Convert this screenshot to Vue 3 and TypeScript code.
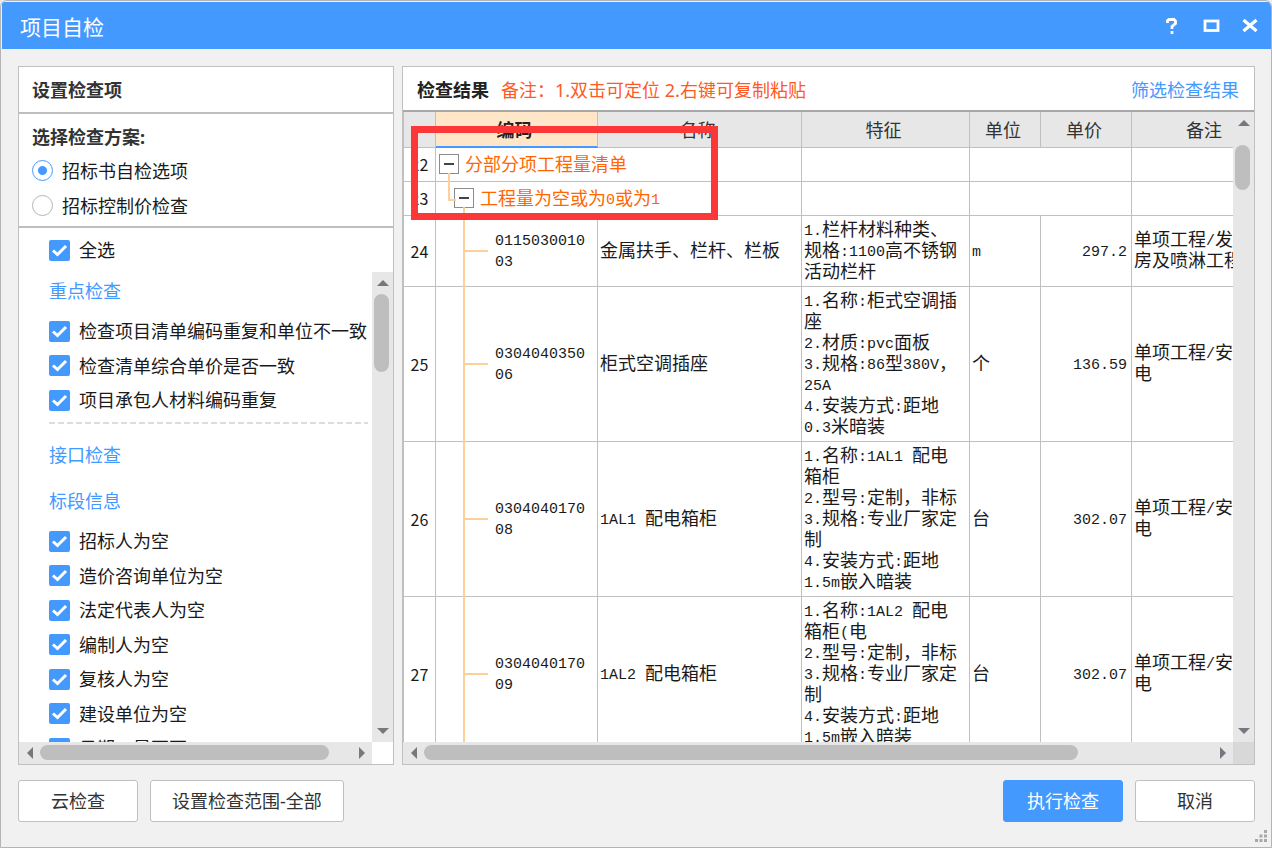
<script setup lang="ts">
import { ref } from 'vue'

interface ResultRow {
  no: number
  code: string
  name: string
  feature: string
  unit: string
  price: string
  remark: string
}

interface Run {
  text: string
  half: boolean
}

const plan = ref('bid')
const allChecked = ref(true)

const keyChecks = ref([
  { label: '检查项目清单编码重复和单位不一致', on: true },
  { label: '检查清单综合单价是否一致', on: true },
  { label: '项目承包人材料编码重复', on: true },
])

const sectionChecks = ref([
  { label: '招标人为空', on: true },
  { label: '造价咨询单位为空', on: true },
  { label: '法定代表人为空', on: true },
  { label: '编制人为空', on: true },
  { label: '复核人为空', on: true },
  { label: '建设单位为空', on: true },
  { label: '日期一是否否', on: true },
])

const rows: ResultRow[] = [
  {
    no: 24,
    code: '0115030010\n03',
    name: '金属扶手、栏杆、栏板',
    feature: '1.栏杆材料种类、\n规格:1100高不锈钢\n活动栏杆',
    unit: 'm',
    price: '297.2',
    remark: '单项工程/发\n房及喷淋工程',
  },
  {
    no: 25,
    code: '0304040350\n06',
    name: '柜式空调插座',
    feature: '1.名称:柜式空调插\n座\n2.材质:pvc面板\n3.规格:86型380V，\n25A\n4.安装方式:距地\n0.3米暗装',
    unit: '个',
    price: '136.59',
    remark: '单项工程/安\n电',
  },
  {
    no: 26,
    code: '0304040170\n08',
    name: '1AL1 配电箱柜',
    feature: '1.名称:1AL1 配电\n箱柜\n2.型号:定制，非标\n3.规格:专业厂家定\n制\n4.安装方式:距地\n1.5m嵌入暗装',
    unit: '台',
    price: '302.07',
    remark: '单项工程/安\n电',
  },
  {
    no: 27,
    code: '0304040170\n09',
    name: '1AL2 配电箱柜',
    feature: '1.名称:1AL2 配电\n箱柜(电\n2.型号:定制，非标\n3.规格:专业厂家定\n制\n4.安装方式:距地\n1.5m嵌入暗装',
    unit: '台',
    price: '302.07',
    remark: '单项工程/安\n电',
  },
]

// Splits text into half-width and full-width runs, so each gets its own font.
function runs(text: string): Run[] {
  return (text.match(/[\x20-\x7e]+|[^\x20-\x7e]+/g) ?? []).map((t) => ({
    text: t,
    half: /^[\x20-\x7e]/.test(t),
  }))
}
</script>

<template>
  <div class="window">
    <header class="titlebar">
      <h1>项目自检</h1>
      <div class="window-buttons">
        <button type="button" aria-label="帮助">
          <svg width="18" height="18" viewBox="0 0 18 18"><path d="M4.5 6V3.500L6 2.500h5L12.500 4v2.500L9 9.500V12M9 14v3" fill="none" stroke="#fff" stroke-width="2.800" /></svg>
        </button>
        <button type="button" aria-label="最大化">
          <svg width="18" height="18" viewBox="0 0 18 18"><rect x="3" y="4" width="13" height="9.500" fill="none" stroke="#fff" stroke-width="2.800" /></svg>
        </button>
        <button type="button" aria-label="关闭">
          <svg width="18" height="18" viewBox="0 0 18 18"><path d="M2.500 3L15.500 14M15.500 3L2.500 14" fill="none" stroke="#fff" stroke-width="3.200" /></svg>
        </button>
      </div>
    </header>

    <main class="content">
      <section class="panel options">
        <h2 class="panel-title">设置检查项</h2>
        <fieldset class="plans">
          <legend>选择检查方案:</legend>
          <label><input v-model="plan" type="radio" name="plan" value="bid" />招标书自检选项</label>
          <label><input v-model="plan" type="radio" name="plan" value="limit" />招标控制价检查</label>
        </fieldset>
        <label class="check select-all"><input v-model="allChecked" type="checkbox" />全选</label>
        <div class="scroll-row">
          <div class="check-list">
            <a class="group key" href="#key">重点检查</a>
            <div class="checks">
              <label v-for="c in keyChecks" :key="c.label" class="check"><input v-model="c.on" type="checkbox" />{{ c.label }}</label>
            </div>
            <svg class="divider" width="100%" height="2"><line x1="0" y1="1" x2="100%" y2="1" stroke="#dcdcdc" stroke-width="2" stroke-dasharray="6 3" /></svg>
            <a class="group api" href="#api">接口检查</a>
            <a class="group info" href="#info">标段信息</a>
            <div class="checks">
              <label v-for="c in sectionChecks" :key="c.label" class="check"><input v-model="c.on" type="checkbox" />{{ c.label }}</label>
            </div>
          </div>
          <div class="vbar">
            <button type="button" aria-label="向上滚动"><i class="arrow up"></i></button>
            <div class="track"><div class="thumb"></div></div>
            <button type="button" aria-label="向下滚动"><i class="arrow down"></i></button>
          </div>
        </div>
        <div class="bottom-row">
          <div class="hbar">
            <button type="button" aria-label="向左滚动"><i class="arrow left"></i></button>
            <div class="track"><div class="thumb"></div></div>
            <button type="button" aria-label="向右滚动"><i class="arrow right"></i></button>
          </div>
          <div class="corner"></div>
        </div>
      </section>

      <section class="panel results">
        <div class="result-title">
          <h2>检查结果</h2>
          <p>备注：1.双击可定位 2.右键可复制粘贴</p>
          <a href="#filter">筛选检查结果</a>
        </div>
        <div class="scroll-row">
          <div class="table-view">
            <table>
              <colgroup>
                <col class="c-no" /><col class="c-code" /><col class="c-name" /><col class="c-feature" />
                <col class="c-unit" /><col class="c-price" /><col class="c-remark" />
              </colgroup>
              <thead>
                <tr>
                  <th></th><th class="sorted">编码</th><th>名称</th><th>特征</th><th>单位</th><th>单价</th><th>备注</th>
                </tr>
              </thead>
              <tbody>
                <tr class="branch">
                  <td class="no">22</td>
                  <td colspan="2">
                    <div class="node level1"><button type="button" class="toggle" aria-label="折叠"></button>分部分项工程量清单</div>
                  </td>
                  <td></td><td colspan="2"></td><td></td>
                </tr>
                <tr class="branch">
                  <td class="no">23</td>
                  <td colspan="2">
                    <div class="node level2"><button type="button" class="toggle" aria-label="折叠"></button><span><span v-for="(r, i) in runs('工程量为空或为0或为1')" :key="i" :class="{ half: r.half }">{{ r.text }}</span></span></div>
                  </td>
                  <td></td><td colspan="2"></td><td></td>
                </tr>
                <tr v-for="row in rows" :key="row.no" class="item">
                  <td class="no">{{ row.no }}</td>
                  <td class="code"><span class="half">{{ row.code }}</span></td>
                  <td><span v-for="(r, i) in runs(row.name)" :key="i" :class="{ half: r.half }">{{ r.text }}</span></td>
                  <td><span v-for="(r, i) in runs(row.feature)" :key="i" :class="{ half: r.half }">{{ r.text }}</span></td>
                  <td><span v-for="(r, i) in runs(row.unit)" :key="i" :class="{ half: r.half }">{{ r.text }}</span></td>
                  <td class="price"><span class="half">{{ row.price }}</span></td>
                  <td><span v-for="(r, i) in runs(row.remark)" :key="i" :class="{ half: r.half }">{{ r.text }}</span></td>
                </tr>
              </tbody>
            </table>
          </div>
          <div class="vbar">
            <button type="button" aria-label="向上滚动"><i class="arrow up"></i></button>
            <div class="track"><div class="thumb"></div></div>
            <button type="button" aria-label="向下滚动"><i class="arrow down"></i></button>
          </div>
        </div>
        <div class="bottom-row">
          <div class="hbar">
            <button type="button" aria-label="向左滚动"><i class="arrow left"></i></button>
            <div class="track"><div class="thumb"></div></div>
            <button type="button" aria-label="向右滚动"><i class="arrow right"></i></button>
          </div>
          <div class="corner"></div>
        </div>
        <div class="highlight"></div>
      </section>
    </main>

    <footer class="actions">
      <button type="button" class="btn">云检查</button>
      <button type="button" class="btn wide">设置检查范围-全部</button>
      <span class="spacer"></span>
      <button type="button" class="btn primary">执行检查</button>
      <button type="button" class="btn">取消</button>
    </footer>
    <svg class="grip" width="12" height="12" viewBox="0 0 12 12" fill="#a8a8a8">
      <path d="M9 0h3v3H9zM4.500 4.500h3v3h-3zM9 4.500h3v3H9zM0 9h3v3H0zM4.500 9h3v3h-3zM9 9h3v3H9z" />
    </svg>
  </div>
</template>

<style>
body {
  margin: 0;
  background: #ececec;
}
</style>

<style scoped>
* {
  box-sizing: border-box;
}
.window {
  position: relative;
  display: flex;
  flex-direction: column;
  height: 100vh;
  padding: 1px 0 0 1px;
  font: 18px/24px "Noto Sans", "Noto Sans CJK SC", sans-serif;
  color: #1a1a1a;
  background: #f1f1f1;
  border: 1px solid #b4b4b4;
  border-radius: 7px 7px 0 0;
  overflow: hidden;
}
h1, h2, p {
  margin: 0;
}
button {
  padding: 0;
  border: 0;
  background: none;
  font: inherit;
  color: inherit;
}
a {
  color: #4499ff;
  text-decoration: none;
}
.titlebar {
  display: flex;
  flex: none;
  align-items: center;
  justify-content: space-between;
  height: 47px;
  padding: 0 12px 0 18px;
  background: #4499ff;
}
h1 {
  padding-top: 3px;
  font-size: 21px;
  font-weight: 400;
  color: #fff;
}
.window-buttons {
  display: flex;
  gap: 21px;
}
.window-buttons button {
  width: 18px;
  height: 18px;
}
.window-buttons svg {
  display: block;
}
.content {
  display: flex;
  flex: 1;
  gap: 8px;
  min-height: 0;
  padding: 17px 16px 0;
}
.panel {
  position: relative;
  display: flex;
  flex-direction: column;
  min-width: 0;
  background: #fff;
  border: 1px solid #c0c0c0;
}
.options {
  flex: none;
  width: 376px;
}
.results {
  flex: 1;
}
.panel-title {
  flex: none;
  height: 47px;
  padding: 11px 13px 0;
  font-size: 18px;
  color: #333;
  border-bottom: 2px solid #bebebe;
}
.plans {
  flex: none;
  height: 114px;
  margin: 0;
  padding: 0 13px;
  border: 0;
  border-bottom: 2px solid #bebebe;
}
.plans legend {
  padding: 11px 0 4px;
  font-weight: 700;
  color: #333;
}
.plans label {
  display: flex;
  align-items: center;
  gap: 9px;
  height: 35px;
}
input {
  appearance: none;
  flex: none;
  width: 21px;
  height: 21px;
  margin: 0;
}
input[type="radio"] {
  border: 1px solid #b4b4b4;
  border-radius: 50%;
}
input[type="radio"]:checked {
  border: 1px solid #4499ff;
  background: radial-gradient(circle, #4499ff 4px, #fff 5px);
}
input[type="checkbox"] {
  border: 1px solid #b4b4b4;
  border-radius: 2px;
}
input[type="checkbox"]:checked {
  border: 0;
  background: #4499ff url("data:image/svg+xml,%3Csvg xmlns='http://www.w3.org/2000/svg' viewBox='0 0 21 21'%3E%3Cpath d='M4 10.500L8.500 14.500L17 6' fill='none' stroke='white' stroke-width='3'/%3E%3C/svg%3E");
}
.check {
  display: flex;
  flex: none;
  align-items: center;
  gap: 9px;
  height: 34px;
  white-space: nowrap;
}
.check:nth-child(even) {
  height: 35px;
}
.select-all {
  height: 44px;
  padding: 0 0 0 30px;
}
.scroll-row {
  display: flex;
  flex: 1;
  min-height: 0;
}
.check-list {
  display: flex;
  flex: 1;
  flex-direction: column;
  min-width: 0;
  padding: 7px 4px 0 30px;
  overflow: hidden;
}
.group {
  flex: none;
}
.key {
  margin-bottom: 11px;
}
.divider {
  flex: none;
  display: block;
  margin-top: 5px;
}
.api {
  margin: 19px 0 22px;
}
.info {
  margin-bottom: 11px;
}
.vbar {
  display: flex;
  flex: none;
  flex-direction: column;
  width: 21px;
  background: #e7e7e7;
}
.bottom-row {
  display: flex;
  flex: none;
  height: 22px;
}
.hbar {
  display: flex;
  flex: 1;
  background: #e7e7e7;
}
.corner {
  width: 21px;
}
.results .corner {
  background: #d8d8d8;
}
.track {
  flex: 1;
}
.thumb {
  background: #bebebe;
  border-radius: 8px;
}
.vbar button,
.hbar button {
  display: flex;
  flex: none;
  align-items: center;
  justify-content: center;
  width: 21px;
  height: 22px;
}
.vbar .thumb {
  width: 15px;
  height: 78px;
  margin: 0 auto 0 2px;
}
.results .vbar .thumb {
  height: 45px;
  margin-top: 11px;
}
.hbar .thumb {
  width: 93%;
  height: 15px;
  margin-top: 3px;
}
.results .hbar .thumb {
  width: 83%;
}
.arrow {
  border: 6px solid transparent;
}
.up {
  border-top: 0;
  border-bottom-color: #777780;
}
.down {
  border-bottom: 0;
  border-top-color: #777780;
}
.left {
  border-left: 0;
  border-right-color: #777780;
}
.right {
  border-right: 0;
  border-left-color: #777780;
}
.result-title {
  display: flex;
  flex: none;
  height: 45px;
  padding: 11px 15px 0 14px;
  border-bottom: 2px solid #a8a8a8;
}
.result-title h2 {
  font-size: 18px;
  color: #222;
}
.result-title p {
  flex: 1;
  margin-left: 12px;
  color: #ff5a26;
}
.table-view {
  flex: 1;
  min-width: 0;
  overflow: hidden;
}
table {
  width: 878px;
  table-layout: fixed;
  border-spacing: 0;
  border-left: 1px solid #c0c0c0;
  font-family: "Noto Sans CJK SC", sans-serif;
  line-height: 21px;
}
.c-no { width: 32px; }
.c-code { width: 162px; }
.c-name { width: 204px; }
.c-feature { width: 168px; }
.c-unit { width: 71px; }
.c-price { width: 91px; }
.c-remark { width: 149px; }
th,
td {
  padding: 0 4px 0 2px;
  border-right: 1px solid #c0c0c0;
  border-bottom: 1px solid #c0c0c0;
}
th {
  height: 36px;
  padding: 0 4px 0 0;
  background: #e7e7e7;
  font-weight: 400;
  color: #333;
}
.sorted {
  background: #ffe6c8;
  border-bottom: 2px solid #4499ff;
  font-weight: 700;
  color: #222;
}
td {
  white-space: pre;
  text-align: left;
}
.half {
  font-family: "Liberation Mono", monospace;
  font-size: 15px;
  line-height: 0;
  vertical-align: 1px;
}
td.no {
  padding: 0;
  text-align: center;
  font-size: 16px;
}
.branch td {
  height: 34px;
}
.node {
  position: relative;
  display: flex;
  align-items: center;
  gap: 6px;
  height: 33px;
  padding: 0 0 2px 1px;
  color: #ff6600;
}
.level2 {
  padding-left: 16px;
}
.level1::after,
.level2::before,
.level2::after {
  content: "";
  position: absolute;
  width: 2px;
  background: #fdd09a;
}
.level1::after {
  left: 10px;
  top: 25px;
  bottom: -1px;
}
.level2::before {
  left: 10px;
  top: 0;
  width: 6px;
  height: 17px;
  background: none;
  border: solid #fdd09a;
  border-width: 0 0 2px 2px;
}
.level2::after {
  left: 25px;
  top: 25px;
  bottom: -1px;
}
.toggle {
  flex: none;
  width: 20px;
  height: 20px;
  border: 1px solid #8c8c8c;
  background: linear-gradient(#444, #444) center / 10px 2px no-repeat #fff;
}
.item td {
  height: 155px;
  padding-bottom: 4px;
}
.item td.no {
  padding-bottom: 0;
}
.item:nth-child(3) td {
  height: 71px;
}
.item .code {
  position: relative;
  padding-left: 59px;
}
.code::before,
.code::after {
  content: "";
  position: absolute;
  left: 27px;
  background: #fdd09a;
}
.code::before {
  top: 0;
  bottom: -1px;
  width: 2px;
}
.code::after {
  top: 50%;
  width: 25px;
  height: 2px;
  margin-top: -1px;
}
td.price {
  text-align: right;
}
.highlight {
  position: absolute;
  left: 8px;
  top: 59px;
  width: 307px;
  height: 94px;
  border: 7px solid #fc3738;
  pointer-events: none;
}
.actions {
  display: flex;
  flex: none;
  gap: 12px;
  height: 82px;
  padding: 15px 16px 0;
}
.btn {
  min-width: 120px;
  height: 42px;
  background: #fff;
  border: 1px solid #c0c0c0;
  border-radius: 3px;
  color: #333;
}
.wide {
  padding: 0 21px;
}
.spacer {
  flex: 1;
}
.primary {
  background: #4499ff;
  border-color: #4499ff;
  color: #fff;
}
.grip {
  position: absolute;
  right: 4px;
  bottom: 5px;
}
</style>
